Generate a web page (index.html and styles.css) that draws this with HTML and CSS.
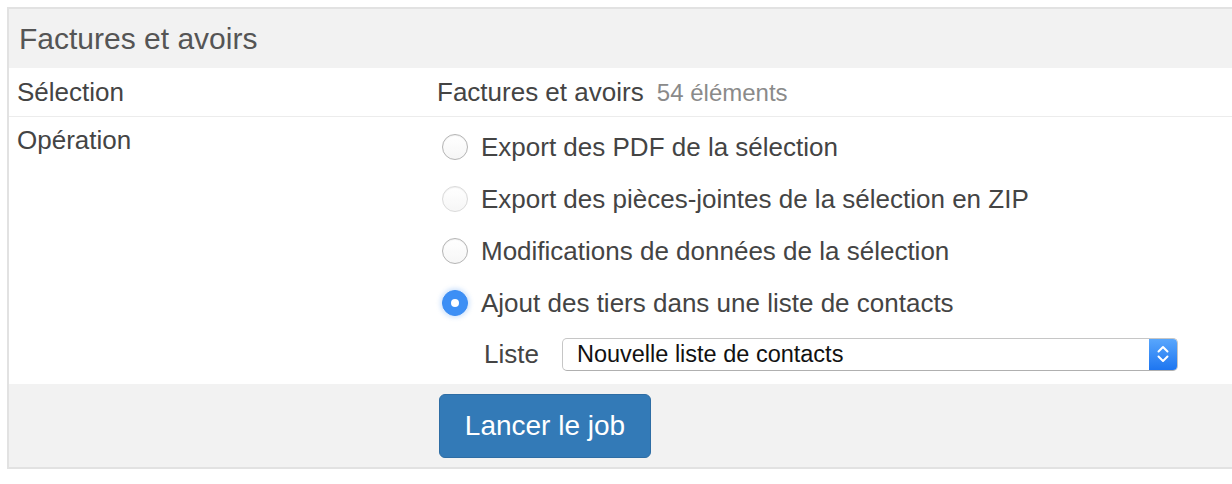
FILE: index.html
```html
<!DOCTYPE html>
<html lang="fr">
<head>
    <meta charset="UTF-8">
    <title>Factures et avoirs</title>
    <link rel="stylesheet" href="styles.css">
</head>
<body>
    <div class="panel">
        <div class="panel-heading">Factures et avoirs</div>

        <div class="row row-selection">
            <div class="row-label">Sélection</div>
            <div class="row-value">
                Factures et avoirs <span class="count">54 éléments</span>
            </div>
        </div>

        <div class="row row-operation">
            <div class="row-label">Opération</div>
            <div class="row-value">
                <div class="option"><span class="radio"></span>Export des PDF de la sélection</div>
                <div class="option"><span class="radio radio-light"></span>Export des pièces-jointes de la sélection en ZIP</div>
                <div class="option"><span class="radio"></span>Modifications de données de la sélection</div>
                <div class="option"><span class="radio radio-checked"></span>Ajout des tiers dans une liste de contacts</div>
                <div class="list-field">
                    <span class="list-label">Liste</span>
                    <div class="select">
                        <span class="select-text">Nouvelle liste de contacts</span>
                        <span class="select-arrows">
                            <svg width="14" height="20" viewBox="0 0 14 20">
                                <path d="M2.5 7.5 L7 3 L11.5 7.5 M2.5 12.5 L7 17 L11.5 12.5" fill="none" stroke="#fff" stroke-width="2" stroke-linecap="round" stroke-linejoin="round"/>
                            </svg>
                        </span>
                    </div>
                </div>
            </div>
        </div>

        <div class="panel-footer">
            <button type="button" class="btn-primary">Lancer le job</button>
        </div>
    </div>
</body>
</html>
```

FILE: styles.css
```css
/* General Reset */
* {
    margin: 0;
    padding: 0;
    box-sizing: border-box;
}

body {
    font-family: 'Liberation Sans', Arial, sans-serif;
    background: #fff;
    color: #444;
    overflow: hidden;
}

.panel {
    margin: 7px 0 0 7px;
    width: 1240px;
    border: 2px solid #e2e2e2;
}

.panel-heading {
    height: 59px;
    display: flex;
    align-items: center;
    padding-left: 10px;
    background: #f2f2f2;
    color: #555;
    font-size: 30px;
}

.row {
    display: grid;
    grid-template-columns: 428px 1fr;
    font-size: 26px;
}

.row-label {
    padding-left: 8px;
}

.row-selection {
    height: 49px;
    align-items: center;
    border-bottom: 1px solid #ececec;
}

.row-selection .row-value {
    font-size: 26px;
}

.row-selection .count {
    margin-left: 6px;
    color: #8a8a8a;
    font-size: 24px;
}

.row-operation {
    padding: 4px 0 13px;
}

.row-operation .row-label {
    line-height: 30px;
    margin-top: 4px;
}

.option {
    height: 52px;
    display: flex;
    align-items: center;
    padding-left: 5px;
    line-height: 30px;
}

.radio {
    width: 26px;
    height: 26px;
    margin-right: 13px;
    border-radius: 50%;
    border: 1px solid #b4b4b4;
    background: linear-gradient(to bottom, #fff, #f6f6f6);
    box-shadow: inset 0 1px 1px rgba(0, 0, 0, 0.06);
    flex-shrink: 0;
}

.radio-light {
    border-color: #dadada;
}

.radio-checked {
    position: relative;
    border-color: #3a8cf3;
    background: #3d8ff5;
    box-shadow: 0 0 4px 2px rgba(80, 150, 245, 0.25);
}

.radio-checked::after {
    content: '';
    position: absolute;
    top: 8px;
    left: 8px;
    width: 8px;
    height: 8px;
    border-radius: 50%;
    background: #fff;
}

.list-field {
    display: flex;
    align-items: center;
    margin-top: 9px;
    padding-left: 47px;
}

.list-label {
    margin-right: 23px;
}

.select {
    width: 616px;
    height: 33px;
    display: flex;
    align-items: center;
    justify-content: space-between;
    border: 1px solid #c6c6c6;
    border-bottom-color: #b0b0b0;
    border-radius: 5px;
    background: #fff;
    overflow: hidden;
}

.select-text {
    padding-left: 14px;
    font-size: 23.5px;
    color: #111;
}

.select-arrows {
    width: 29px;
    height: 33px;
    margin-top: -1px;
    margin-right: -1px;
    display: flex;
    align-items: center;
    justify-content: center;
    background: linear-gradient(to bottom, #5aa8fd, #1c74f0);
    border-radius: 0 5px 5px 0;
}

.panel-footer {
    height: 83px;
    padding: 10px 0 0 430px;
    background: #f2f2f2;
}

.btn-primary {
    width: 212px;
    height: 64px;
    background: #337ab7;
    border: 1px solid #2e6da4;
    border-radius: 6px;
    color: #fff;
    font-family: inherit;
    font-size: 28px;
    cursor: pointer;
}
```
